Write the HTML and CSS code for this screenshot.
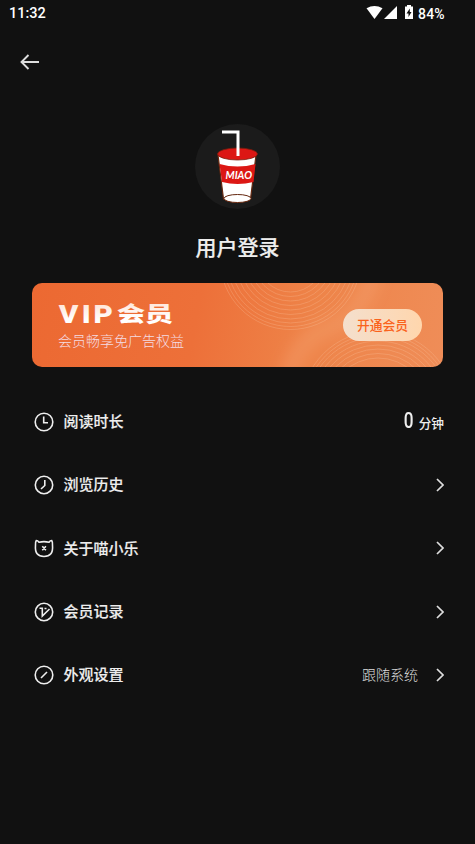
FILE: index.html
```html
<!DOCTYPE html>
<html lang="zh-CN">
<head>
<meta charset="utf-8">
<title>用户登录</title>
<link rel="stylesheet" href="styles.css">
</head>
<body>
<header class="status">
  <span class="time">11:32</span>
  <svg class="status-icons" width="50" height="18" viewBox="0 0 50 18" fill="#fff">
    <path d="M.5 3.2Q8.500-1.300 16.500 3.200L8.500 14Z"/>
    <path d="M31 1V14H18Z"/>
    <path fill-rule="evenodd" d="M41 0h4v1.500h2V14h-8V1.500h2ZM43.800 3.500L40.500 8.500H42.500V12L45.500 7H43.800Z"/>
  </svg>
  <span class="battery">84%</span>
</header>
<nav class="toolbar">
  <svg width="20" height="16" viewBox="0 0 20 16" fill="none" stroke="#ddd" stroke-width="1.900"><path d="M19 8H1.500M8.500 1L1.500 8l7 7"/></svg>
</nav>
<main>
  <section class="profile">
    <div class="avatar">
      <svg width="85" height="85" viewBox="0 0 85 85">
        <path d="M23 31L28.500 75Q42 82 55.500 75L61 31Z" fill="#fff" stroke="#652810" stroke-width="1.200"/>
        <ellipse cx="42.500" cy="30" rx="20" ry="6" fill="#dc1714" stroke="#7c1d0d" stroke-width=".8"/>
        <path d="M24.500 40Q42.500 45 60.500 40L58.500 58Q42.500 62 27 58Z" fill="#dc1714"/>
        <ellipse cx="42.500" cy="74.500" rx="13.500" ry="4" fill="#fff" stroke="#652810"/>
        <path d="M27 8H43V32" fill="none" stroke="#fff" stroke-width="3"/>
        <text class="cup-name" x="30.500" y="55" textLength="26.500" lengthAdjust="spacingAndGlyphs">MIAO</text>
      </svg>
    </div>
    <h1>用户登录</h1>
  </section>
  <section class="vip">
    <svg class="rings" width="411" height="84" viewBox="0 0 411 84">
      <defs>
        <filter id="soft" x="-50%" y="-50%" width="200%" height="200%"><feGaussianBlur stdDeviation="7"/></filter>
      </defs>
      <path d="M342-10Q328 34 297 45T256 94" fill="none" stroke="#ffc9a5" stroke-opacity=".17" stroke-width="18" filter="url(#soft)"/>
      <g fill="none" stroke="#ffd0ae" stroke-opacity=".3" stroke-width=".8">
        <circle cx="258.500" cy="-24" r="33"/><circle cx="258.500" cy="-24" r="37.500"/><circle cx="258.500" cy="-24" r="42"/><circle cx="258.500" cy="-24" r="46.500"/><circle cx="258.500" cy="-24" r="51"/><circle cx="258.500" cy="-24" r="55.500"/><circle cx="258.500" cy="-24" r="60"/><circle cx="258.500" cy="-24" r="64"/><circle cx="258.500" cy="-24" r="67.500"/><circle cx="258.500" cy="-24" r="70.500"/>
        <circle cx="346" cy="125" r="50"/><circle cx="346" cy="125" r="54.500"/><circle cx="346" cy="125" r="59"/><circle cx="346" cy="125" r="63"/><circle cx="346" cy="125" r="67"/><circle cx="346" cy="125" r="71"/><circle cx="346" cy="125" r="74"/><circle cx="346" cy="125" r="77"/>
      </g>
    </svg>
    <div class="vip-copy">
      <svg class="vip-title" width="130" height="30" viewBox="0 0 130 30">
        <defs><linearGradient id="shine" x1="0" y1="0" x2="0" y2="1"><stop offset="0" stop-color="#ffdcca"/><stop offset=".7" stop-color="#fff"/></linearGradient></defs>
        <text class="latin" transform="translate(.8 24.500) scale(1.120 1)" x="0 20.500 31" y="0">VIP</text>
        <text class="han" transform="translate(59 22.800) scale(1.340 1)" x="0" y="0">会员</text>
      </svg>
      <p>会员畅享免广告权益</p>
    </div>
    <button class="open">开通会员</button>
  </section>
  <ul class="menu">
    <li>
      <svg class="icon" viewBox="0 0 20 20"><circle cx="10" cy="10" r="8.800"/><path d="M9.700 4.500V10.800H14"/></svg>
      <span class="label">阅读时长</span>
      <span class="duration"><b>0</b>分钟</span>
    </li>
    <li>
      <svg class="icon" viewBox="0 0 20 20"><circle cx="10" cy="10" r="8.700"/><path d="M10.800 5V10.500L7 14"/></svg>
      <span class="label">浏览历史</span>
      <svg class="chevron" viewBox="0 0 8 14"><path d="M1 1l6 6-6 6"/></svg>
    </li>
    <li>
      <svg class="icon" viewBox="0 0 20 20"><path d="M1.500 7.500Q1.200 4 2.300 2.500Q3.800 2.500 5 4.200Q10 3 15 4.200Q16.200 2.500 17.700 2.500Q18.800 4 18.500 7.500Q19.500 18.500 10 18.500T1.500 7.500ZM8.300 8.300l3.600 4M11.900 8.300l-3.600 4"/></svg>
      <span class="label">关于喵小乐</span>
      <svg class="chevron" viewBox="0 0 8 14"><path d="M1 1l6 6-6 6"/></svg>
    </li>
    <li>
      <svg class="icon" viewBox="0 0 20 20"><circle cx="10" cy="10" r="8.700"/><path d="M5.500 6.200H8.300V14L15.500 7M10.500 6.500H12.500"/></svg>
      <span class="label">会员记录</span>
      <svg class="chevron" viewBox="0 0 8 14"><path d="M1 1l6 6-6 6"/></svg>
    </li>
    <li>
      <svg class="icon" viewBox="0 0 20 20"><circle cx="10" cy="10" r="8.800"/><path d="M7 13l6-6"/></svg>
      <span class="label">外观设置</span>
      <span class="value">跟随系统</span>
      <svg class="chevron" viewBox="0 0 8 14"><path d="M1 1l6 6-6 6"/></svg>
    </li>
  </ul>
</main>
</body>
</html>
```
FILE: styles.css
```css
* { box-sizing: border-box; }
body {
  margin: 0;
  height: 844px;
  overflow: hidden;
  background: #111;
  color: #eee;
  font-family: "Noto Sans CJK SC", sans-serif;
}
svg { display: block; flex: none; }
.status {
  display: flex;
  align-items: center;
  height: 28px;
  padding: 0 29px 0 9px;
  font: 500 14.500px/26px Roboto, sans-serif;
  color: #fff;
}
.status-icons { margin: 0 2px 0 auto; }
.battery { width: 28px; white-space: nowrap; font-size: 14px; letter-spacing: .2px; }
.toolbar { height: 68px; padding: 26px 20px; }
.profile { display: flex; flex-direction: column; align-items: center; padding-top: 28px; }
.avatar { width: 85px; height: 85px; border-radius: 50%; background: #1b1b1b; }
.cup-name { font: italic 700 10.500px Lato, sans-serif; fill: #fff; }
h1 { margin: 21px 0 0; font-size: 21px; line-height: 32px; font-weight: 500; -webkit-text-stroke: .2px #eee; }
.vip {
  position: relative;
  display: flex;
  align-items: center;
  justify-content: space-between;
  height: 84px;
  margin: 21px 32px 0;
  padding: 0 21px 0 26px;
  border-radius: 10px;
  overflow: hidden;
  background: linear-gradient(100deg, #ec6932 0%, #ed7039 40%, #ee8449 68%, #ef8d58 100%);
}
.rings { position: absolute; inset: 0; }
.vip-copy { position: relative; padding-bottom: 1px; }
.vip-title { overflow: visible; }
.vip-title text { fill: url(#shine); font-weight: 900; }
.latin { font: 900 26.500px Roboto, sans-serif; }
.han { font-family: "Noto Sans CJK SC", sans-serif; font-size: 21px; }
.vip p { margin: 1px 0 0; font-size: 14px; line-height: 22px; font-weight: 300; color: #f4dce3; }
.open {
  position: relative;
  width: 79px;
  height: 32px;
  padding: 0;
  border: 0;
  border-radius: 16px;
  background: linear-gradient(90deg, #f4dfcd, #ffd6ad);
  color: #fa621c;
  font: 500 12.800px/32px "Noto Sans CJK SC", sans-serif;
}
.menu { list-style: none; margin: 23px 31px 0 34px; padding: 0; }
.menu li { display: flex; align-items: center; height: 63.300px; font-size: 15px; line-height: 24px; font-weight: 500; }
.icon { width: 20px; height: 20px; margin: 0 9.200px 0 .3px; fill: none; stroke: #eee; stroke-width: 1.600; }
.label { padding-bottom: 1px; -webkit-text-stroke: .15px #eee; }
.chevron { width: 8px; height: 14px; margin: 0 .5px 0 auto; fill: none; stroke: #ddd; stroke-width: 1.700; }
.duration { display: flex; align-items: baseline; margin-left: auto; font-size: 12.700px; }
.duration b { margin-right: 5px; font: 500 22px/24px Roboto, sans-serif; transform: scaleX(.78); transform-origin: right; }
.value { margin-left: auto; padding-bottom: 2px; font-size: 14px; font-weight: 300; color: #ddd; }
.value + .chevron { margin-left: 17.500px; }
```
